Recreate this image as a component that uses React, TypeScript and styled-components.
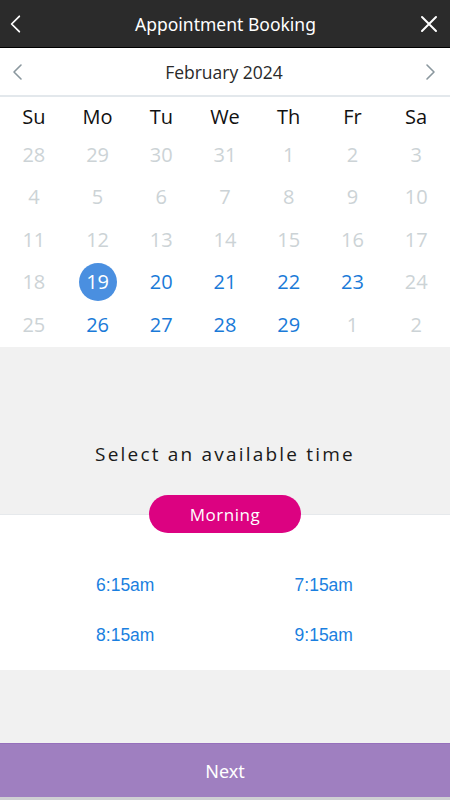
import styled, { createGlobalStyle } from 'styled-components'

const GlobalStyle = createGlobalStyle`
    body {
        margin: 0;
        background: #f1f1f1;
        font-family: 'Open Sans', 'Noto Sans', sans-serif;
    }
`

type Day = { label: number; state: 'muted' | 'open' | 'selected' }

const weekdays = ['Su', 'Mo', 'Tu', 'We', 'Th', 'Fr', 'Sa']

const buildDays = (): Day[] => {
    const days: Day[] = []
    ;[28, 29, 30, 31].forEach((n) => days.push({ label: n, state: 'muted' }))
    for (let n = 1; n <= 29; n++) {
        let state: Day['state'] = 'muted'
        if (n === 19) state = 'selected'
        else if (n >= 20 && n <= 23) state = 'open'
        else if (n >= 26) state = 'open'
        days.push({ label: n, state })
    }
    ;[1, 2].forEach((n) => days.push({ label: n, state: 'muted' }))
    return days
}

const times = ['6:15am', '7:15am', '8:15am', '9:15am']

const Chevron = ({ dir, color, size = 20 }: { dir: 'left' | 'right'; color: string; size?: number }) => (
    <svg width={size} height={size} viewBox="0 0 20 20" fill="none">
        <path
            d={dir === 'left' ? 'M13 3 L6 10 L13 17' : 'M7 3 L14 10 L7 17'}
            stroke={color}
            strokeWidth={1.6}
            strokeLinecap="round"
            strokeLinejoin="round"
        />
    </svg>
)

export default function App() {
    const days = buildDays()

    return (
        <Root>
            <GlobalStyle />
            <Header>
                <IconButton>
                    <Chevron dir="left" color="#ffffff" size={22} />
                </IconButton>
                <Title>Appointment Booking</Title>
                <IconButton>
                    <svg width="18" height="18" viewBox="0 0 18 18">
                        <path d="M2 2 L16 16 M16 2 L2 16" stroke="#fff" strokeWidth={2} strokeLinecap="round" />
                    </svg>
                </IconButton>
            </Header>

            <MonthBar>
                <IconButton>
                    <Chevron dir="left" color="#8a979e" />
                </IconButton>
                <MonthLabel>February 2024</MonthLabel>
                <IconButton>
                    <Chevron dir="right" color="#8a979e" />
                </IconButton>
            </MonthBar>

            <Calendar>
                {weekdays.map((w) => (
                    <Weekday key={w}>{w}</Weekday>
                ))}
                {days.map((d, i) => (
                    <DayCell key={i}>
                        <DayNumber $state={d.state}>{d.label}</DayNumber>
                    </DayCell>
                ))}
            </Calendar>

            <Prompt>Select an available time</Prompt>

            <TimesPanel>
                <Pill>Morning</Pill>
                <TimesGrid>
                    {times.map((t) => (
                        <TimeSlot key={t}>{t}</TimeSlot>
                    ))}
                </TimesGrid>
            </TimesPanel>

            <Spacer />

            <NextButton>Next</NextButton>
        </Root>
    )
}

const Root = styled.div`
    width: 450px;
    height: 800px;
    display: flex;
    flex-direction: column;
    background: #f1f1f1;
    overflow: hidden;
`

const Header = styled.div`
    height: 47px;
    flex-shrink: 0;
    background: #2b2b2b;
    border-bottom: 1px solid #000;
    display: flex;
    align-items: center;
    justify-content: space-between;
    padding: 0 7px 0 2px;
`

const IconButton = styled.div`
    width: 28px;
    height: 28px;
    display: flex;
    align-items: center;
    justify-content: center;
`

const Title = styled.div`
    color: #fff;
    font-size: 17.5px;
    font-family: 'Noto Sans', 'Open Sans', sans-serif;
    margin-left: 6px;
`

const MonthBar = styled.div`
    height: 46px;
    flex-shrink: 0;
    background: #fff;
    border-bottom: 2px solid #e3e8ec;
    display: flex;
    align-items: center;
    justify-content: space-between;
    padding: 1px 6px 0 4px;
`

const MonthLabel = styled.div`
    font-size: 17.5px;
    color: #2a2a2a;
`

const Calendar = styled.div`
    background: #fff;
    display: grid;
    grid-template-columns: repeat(7, 1fr);
    grid-template-rows: 36px;
    grid-auto-rows: 42.5px;
    padding: 0 2px;
    height: 250px;
    flex-shrink: 0;
    box-sizing: border-box;
`

const Weekday = styled.div`
    display: flex;
    align-items: center;
    justify-content: center;
    font-size: 20px;
    color: #111;
    padding-top: 2px;
`

const DayCell = styled.div`
    display: flex;
    align-items: center;
    justify-content: center;
`

const DayNumber = styled.div<{ $state: Day['state'] }>`
    width: 38px;
    height: 38px;
    border-radius: 50%;
    display: flex;
    align-items: center;
    justify-content: center;
    font-size: 20px;
    color: ${({ $state }) => ($state === 'muted' ? '#ccd3d6' : $state === 'open' ? '#1a7ad8' : '#fff')};
    background: ${({ $state }) => ($state === 'selected' ? '#4a8fe0' : 'transparent')};
`

const Prompt = styled.div`
    height: 167px;
    flex-shrink: 0;
    display: flex;
    align-items: center;
    justify-content: center;
    padding-top: 46px;
    box-sizing: border-box;
    font-size: 19px;
    letter-spacing: 2.2px;
    color: #1a1a1a;
`

const TimesPanel = styled.div`
    position: relative;
    background: #fff;
    border-top: 1px solid #e6e9ec;
    height: 156px;
    flex-shrink: 0;
    box-sizing: border-box;
    padding: 45px 25px 0;
`

const Pill = styled.div`
    position: absolute;
    left: 50%;
    top: -20px;
    transform: translateX(-50%);
    width: 152px;
    height: 38px;
    border-radius: 19px;
    background: #dc0281;
    color: #fff;
    font-size: 17px;
    display: flex;
    align-items: center;
    justify-content: center;
    letter-spacing: 0.5px;
`

const TimesGrid = styled.div`
    display: grid;
    grid-template-columns: 1fr 1fr;
    grid-auto-rows: 50px;
    padding-left: 1px;
    padding-right: 2px;
`

const TimeSlot = styled.div`
    font-family: 'Liberation Sans', Arial, sans-serif;
    font-size: 17.5px;
    color: #1a7fe0;
    text-align: center;
    line-height: 50px;
    height: 50px;
`

const Spacer = styled.div`
    flex: 1;
`

const NextButton = styled.div`
    height: 52px;
    flex-shrink: 0;
    background: #9f7fc0;
    border-top: 1px solid #9670bc;
    border-bottom: 3px solid #cfcfd3;
    color: #fff;
    font-size: 18px;
    display: flex;
    align-items: center;
    justify-content: center;
    padding-top: 1px;
    font-family: 'Noto Sans', 'Open Sans', sans-serif;
`
